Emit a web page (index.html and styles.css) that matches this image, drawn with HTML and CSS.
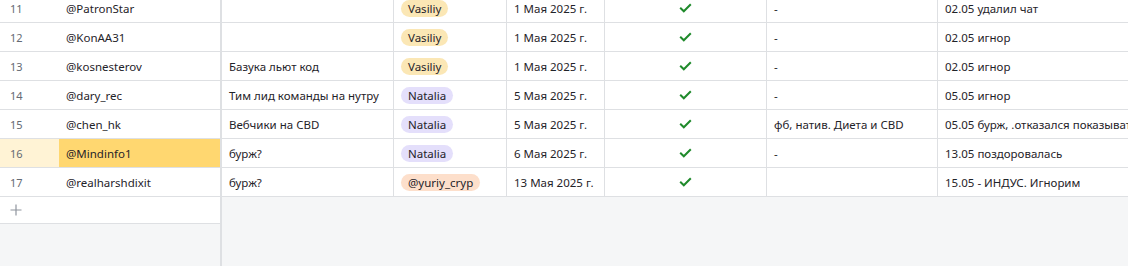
FILE: index.html
```html
<!DOCTYPE html>
<html lang="ru">
<head>
<meta charset="utf-8">
<link rel="stylesheet" href="styles.css">
</head>
<body>
<div class="sheet">
  <div class="pane left">
    <div class="row"><div class="num">11</div><div class="cell handle">@PatronStar</div></div>
    <div class="row"><div class="num">12</div><div class="cell handle">@KonAA31</div></div>
    <div class="row"><div class="num">13</div><div class="cell handle">@kosnesterov</div></div>
    <div class="row"><div class="num">14</div><div class="cell handle">@dary_rec</div></div>
    <div class="row"><div class="num">15</div><div class="cell handle">@chen_hk</div></div>
    <div class="row active"><div class="num">16</div><div class="cell handle">@Mindinfo1</div></div>
    <div class="row"><div class="num">17</div><div class="cell handle">@realharshdixit</div></div>
    <div class="row addrow">
      <svg class="plus" width="12" height="12" viewBox="0 0 12 12"><path d="M6 0.5V11.5M0.5 6H11.5" stroke="#8f959e" stroke-width="1.2" fill="none"/></svg>
    </div>
  </div>
  <div class="divider"></div>
  <div class="pane right">
    <div class="row">
      <div class="cell c3"></div>
      <div class="cell c4"><span class="chip yellow">Vasiliy</span></div>
      <div class="cell c5">1 Мая 2025 г.</div>
      <div class="cell c6"><svg class="check" width="13" height="10" viewBox="0 0 13 10"><path d="M1.2 4.8L4.8 8.3L11.8 1.3" stroke="#1f8a2b" stroke-width="2" fill="none"/></svg></div>
      <div class="cell c7">-</div>
      <div class="cell c8">02.05 удалил чат</div>
    </div>
    <div class="row">
      <div class="cell c3"></div>
      <div class="cell c4"><span class="chip yellow">Vasiliy</span></div>
      <div class="cell c5">1 Мая 2025 г.</div>
      <div class="cell c6"><svg class="check" width="13" height="10" viewBox="0 0 13 10"><path d="M1.2 4.8L4.8 8.3L11.8 1.3" stroke="#1f8a2b" stroke-width="2" fill="none"/></svg></div>
      <div class="cell c7">-</div>
      <div class="cell c8">02.05 игнор</div>
    </div>
    <div class="row">
      <div class="cell c3">Базука льют код</div>
      <div class="cell c4"><span class="chip yellow">Vasiliy</span></div>
      <div class="cell c5">1 Мая 2025 г.</div>
      <div class="cell c6"><svg class="check" width="13" height="10" viewBox="0 0 13 10"><path d="M1.2 4.8L4.8 8.3L11.8 1.3" stroke="#1f8a2b" stroke-width="2" fill="none"/></svg></div>
      <div class="cell c7">-</div>
      <div class="cell c8">02.05 игнор</div>
    </div>
    <div class="row">
      <div class="cell c3">Тим лид команды на нутру</div>
      <div class="cell c4"><span class="chip purple">Natalia</span></div>
      <div class="cell c5">5 Мая 2025 г.</div>
      <div class="cell c6"><svg class="check" width="13" height="10" viewBox="0 0 13 10"><path d="M1.2 4.8L4.8 8.3L11.8 1.3" stroke="#1f8a2b" stroke-width="2" fill="none"/></svg></div>
      <div class="cell c7">-</div>
      <div class="cell c8">05.05 игнор</div>
    </div>
    <div class="row">
      <div class="cell c3">Вебчики на CBD</div>
      <div class="cell c4"><span class="chip purple">Natalia</span></div>
      <div class="cell c5">5 Мая 2025 г.</div>
      <div class="cell c6"><svg class="check" width="13" height="10" viewBox="0 0 13 10"><path d="M1.2 4.8L4.8 8.3L11.8 1.3" stroke="#1f8a2b" stroke-width="2" fill="none"/></svg></div>
      <div class="cell c7">фб, натив. Диета и CBD</div>
      <div class="cell c8">05.05 бурж, .отказался показыват</div>
    </div>
    <div class="row">
      <div class="cell c3">бурж?</div>
      <div class="cell c4"><span class="chip purple">Natalia</span></div>
      <div class="cell c5">6 Мая 2025 г.</div>
      <div class="cell c6"><svg class="check" width="13" height="10" viewBox="0 0 13 10"><path d="M1.2 4.8L4.8 8.3L11.8 1.3" stroke="#1f8a2b" stroke-width="2" fill="none"/></svg></div>
      <div class="cell c7">-</div>
      <div class="cell c8">13.05 поздоровалась</div>
    </div>
    <div class="row">
      <div class="cell c3">бурж?</div>
      <div class="cell c4"><span class="chip peach">@yuriy_cryp</span></div>
      <div class="cell c5">13 Мая 2025 г.</div>
      <div class="cell c6"><svg class="check" width="13" height="10" viewBox="0 0 13 10"><path d="M1.2 4.8L4.8 8.3L11.8 1.3" stroke="#1f8a2b" stroke-width="2" fill="none"/></svg></div>
      <div class="cell c7"></div>
      <div class="cell c8">15.05 - ИНДУС. Игнорим</div>
    </div>
  </div>
</div>
</body>
</html>
```

FILE: styles.css
```css
* { box-sizing: border-box; }
html, body {
  margin: 0;
  padding: 0;
  width: 1128px;
  height: 266px;
  overflow: hidden;
  background: #f5f6f7;
  font-family: "Noto Sans", "Open Sans", sans-serif;
  font-size: 11.5px;
  color: #1f2329;
}
.sheet {
  display: flex;
  align-items: stretch;
  height: 272px;
  margin-top: -6px;
}
.pane {
  display: flex;
  flex-direction: column;
}
.left { width: 220px; flex: none; }
.right { flex: 1; min-width: 0; overflow: hidden; }
.divider {
  width: 2px;
  flex: none;
  background: #dee0e3;
}
.row {
  display: flex;
  height: 29px;
  flex: none;
  background: #fff;
  border-bottom: 1px solid #dee0e3;
}
.cell {
  display: flex;
  align-items: center;
  padding: 0 7px;
  white-space: nowrap;
  overflow: hidden;
  border-right: 1px solid #dee0e3;
}
.num {
  width: 59px;
  flex: none;
  display: flex;
  align-items: center;
  padding-left: 10px;
  color: #646a73;
  font-size: 11px;
}
.handle {
  flex: 1;
  border-right: none;
}
.active .num { background: #fff3d5; }
.active .handle { background: #ffd770; }
.addrow {
  height: 27px;
  align-items: center;
  padding-left: 10px;
}
.c3 { width: 172px; flex: none; }
.c4 { width: 113px; flex: none; }
.c5 { width: 98px; flex: none; }
.c6 { width: 162px; flex: none; justify-content: center; }
.c7 { width: 171px; flex: none; }
.c8 { flex: 1; border-right: none; }
.chip {
  display: inline-block;
  height: 17px;
  line-height: 17px;
  padding: 0 7px;
  border-radius: 9px;
}
.yellow { background: #fbe7b5; }
.purple { background: #e4dffb; }
.peach { background: #fddfcb; }
.check { display: block; }
```
